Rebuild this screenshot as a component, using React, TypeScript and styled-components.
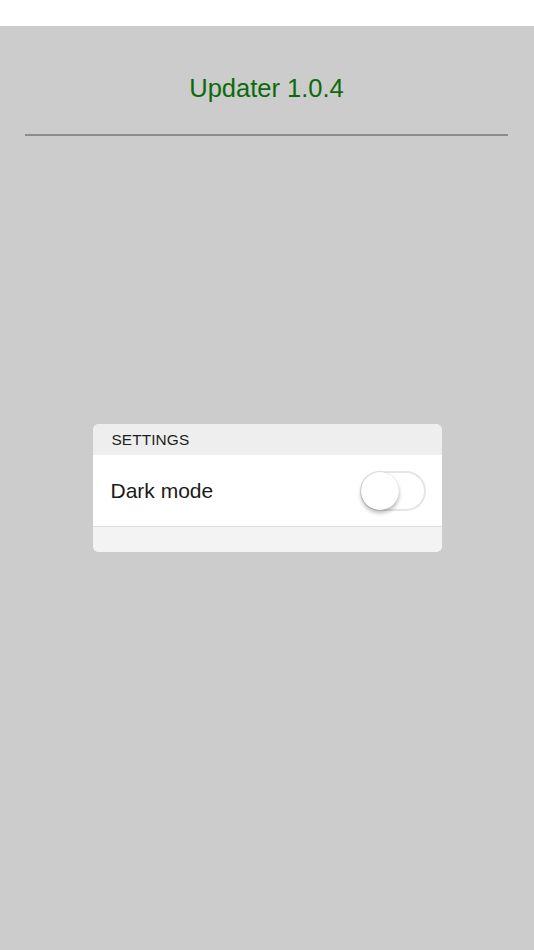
import React, { useState } from "react";
import styled, { createGlobalStyle } from "styled-components";

const GlobalStyle = createGlobalStyle`
  html, body { margin: 0; padding: 0; background: #ffffff; }
  body { font-family: "Liberation Sans", Arial, Helvetica, sans-serif; }
  * { box-sizing: border-box; }
`;

const Screen = styled.div`
  display: flex;
  flex-direction: column;
  width: 534px;
  height: 950px;
`;

const StatusBar = styled.div`
  height: 26px;
  flex: none;
  background: #ffffff;
`;

const Stage = styled.main`
  flex: 1;
  display: grid;
  grid-template-areas: "stack";
  background: #cccccc;
`;

const Header = styled.header`
  grid-area: stack;
  align-self: start;
  display: flex;
  flex-direction: column;
  align-items: center;
  padding: 47px 26px 0 25px;
`;

const Title = styled.h1`
  margin: 0;
  font-size: 25.5px;
  line-height: 30px;
  font-weight: 400;
  color: #0b6a0b;
`;

const Rule = styled.hr`
  align-self: stretch;
  margin: 31px 0 0;
  border: none;
  height: 2px;
  background: #8c8c8c;
`;

const Card = styled.section`
  grid-area: stack;
  align-self: center;
  justify-self: center;
  width: 349px;
  border-radius: 6px;
  overflow: hidden;
  background: #f3f3f3;
  display: flex;
  flex-direction: column;
`;

const SectionHeader = styled.div`
  height: 31px;
  display: flex;
  align-items: center;
  padding: 1px 0 0 19px;
  background: #eeeeee;
  font-size: 15.4px;
  color: #1e1e1e;
  letter-spacing: 0.1px;
`;

const Row = styled.div`
  height: 72px;
  display: flex;
  align-items: center;
  justify-content: space-between;
  padding: 0 16px 0 18px;
  background: #ffffff;
  border-bottom: 1px solid #dedede;
`;

const Label = styled.span`
  font-size: 21px;
  color: #1a1a1a;
`;

const Footer = styled.div`
  height: 25px;
  background: #f3f3f3;
`;

const Track = styled.button<{ $on: boolean }>`
  position: relative;
  width: 66px;
  height: 40px;
  padding: 0;
  border-radius: 20px;
  border: 2px solid ${(p) => (p.$on ? "#4cd964" : "#e5e5e5")};
  background: ${(p) => (p.$on ? "#4cd964" : "#ffffff")};
  cursor: pointer;
  outline: none;
`;

const Knob = styled.span<{ $on: boolean }>`
  position: absolute;
  top: -1px;
  left: ${(p) => (p.$on ? "25px" : "-1px")};
  width: 38px;
  height: 38px;
  border-radius: 50%;
  background: #ffffff;
  box-shadow: 0 3px 4px rgba(0, 0, 0, 0.28), 0 0 1px rgba(0, 0, 0, 0.2);
  transition: left 0.2s;
`;

export default function App() {
  const [dark, setDark] = useState(false);
  return (
    <>
      <GlobalStyle />
      <Screen>
        <StatusBar />
        <Stage>
          <Header>
            <Title>Updater 1.0.4</Title>
            <Rule />
          </Header>
          <Card>
            <SectionHeader>SETTINGS</SectionHeader>
            <Row>
              <Label>Dark mode</Label>
              <Track $on={dark} onClick={() => setDark(!dark)} aria-label="Dark mode">
                <Knob $on={dark} />
              </Track>
            </Row>
            <Footer />
          </Card>
        </Stage>
      </Screen>
    </>
  );
}
